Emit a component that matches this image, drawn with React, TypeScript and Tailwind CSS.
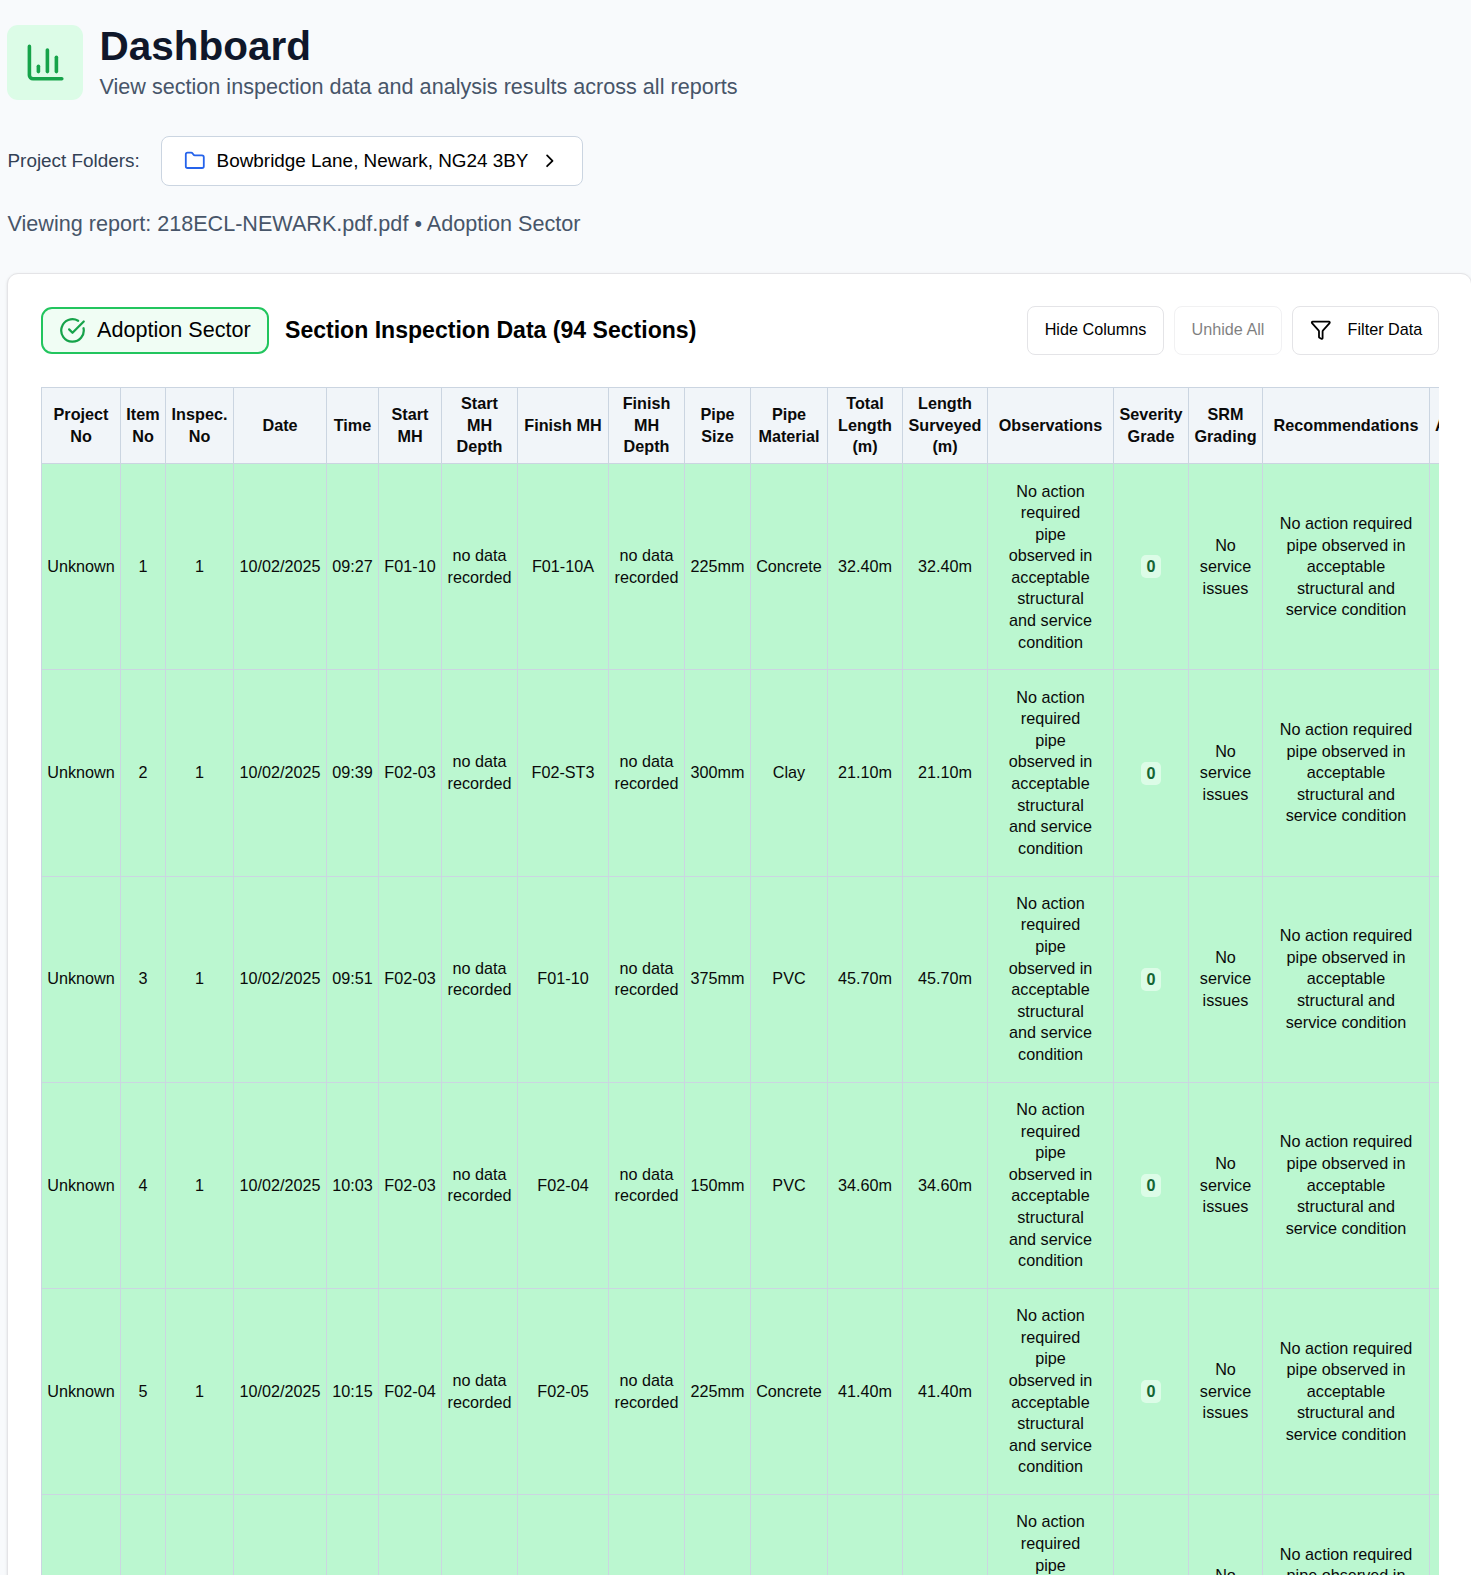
import React from "react";
import { ChartColumn, ChevronRight, CircleCheckBig, Filter, Folder } from "lucide-react";

const headers = [
  "Project No", "Item No", "Inspec. No", "Date", "Time", "Start MH", "Start MH Depth", "Finish MH", "Finish MH Depth",
  "Pipe Size", "Pipe Material", "Total Length (m)", "Length Surveyed (m)", "Observations", "Severity Grade",
  "SRM Grading", "Recommendations", "Adoptable",
];

const widths = [79, 45, 68, 93, 52, 63, 76, 91, 76, 66, 77, 75, 85, 126, 75, 74, 167, 90];

const verdict = "No action required pipe observed in acceptable structural and service condition";

const rows = [
  { item: 1, time: "09:27", start: "F01-10", finish: "F01-10A", size: "225mm", material: "Concrete", length: "32.40m" },
  { item: 2, time: "09:39", start: "F02-03", finish: "F02-ST3", size: "300mm", material: "Clay", length: "21.10m" },
  { item: 3, time: "09:51", start: "F02-03", finish: "F01-10", size: "375mm", material: "PVC", length: "45.70m" },
  { item: 4, time: "10:03", start: "F02-03", finish: "F02-04", size: "150mm", material: "PVC", length: "34.60m" },
  { item: 5, time: "10:15", start: "F02-04", finish: "F02-05", size: "225mm", material: "Concrete", length: "41.40m" },
  { item: 6, time: "10:27", start: "F02-05", finish: "F02-06", size: "225mm", material: "Concrete", length: "28.50m" },
];

const cell = "border border-[#cbd5e1] text-center align-middle";

function SectionRow({ row }: { row: (typeof rows)[number] }) {
  const values = [
    "Unknown", row.item, 1, "10/02/2025", row.time, row.start, "no data recorded", row.finish, "no data recorded",
    row.size, row.material, row.length, row.length,
  ];
  return (
    <tr className="h-[206.2px] bg-[#bbf7d0]">
      {values.map((value, i) => (
        <td key={i} className={`${cell} px-[4px]`}>{value}</td>
      ))}
      <td className={`${cell} px-[19px]`}>{verdict}</td>
      <td className={cell}>
        <span className="inline-block rounded-[5px] bg-[#dcfce7] px-[5.4px] py-px font-bold leading-[21px] text-[#166534]">0</span>
      </td>
      <td className={`${cell} px-2`}>No service issues</td>
      <td className={`${cell} px-4`}>{verdict}</td>
      <td className={cell}></td>
    </tr>
  );
}

export default function App() {
  return (
    <div className="h-[1575px] overflow-hidden bg-[#f8fafc] pl-[7px] pt-[25px] font-['Liberation_Sans',Arial,sans-serif] text-black">
      <header className="flex h-[75px] items-start gap-[16px]">
        <div className="flex h-[75px] w-[76px] items-center justify-center rounded-[11px] bg-[#dcfce7] pl-[1px]">
          <ChartColumn className="size-[43.2px] text-[#16a34a]" strokeWidth={2} />
        </div>
        <div className="pl-[0.5px]">
          <h1 className="text-[40.5px] font-bold leading-[43px] text-[#0f172a]">Dashboard</h1>
          <p className="text-[21.6px] leading-[37px] text-[#475569]">
            View section inspection data and analysis results across all reports
          </p>
        </div>
      </header>

      <div className="mt-[36px] flex h-[50px] items-center">
        <span className="w-[154px] pl-[0.5px] text-[18.9px] text-[#334155]">Project Folders:</span>
        <button className="flex h-[50px] w-[422px] items-center rounded-[8px] border border-[#cbd5e1] bg-white pl-[22px] text-[18.9px]">
          <Folder className="size-[21.6px] text-[#2563eb]" />
          <span className="ml-[11px]">Bowbridge Lane, Newark, NG24 3BY</span>
          <ChevronRight className="ml-[11px] size-[21.6px]" />
        </button>
      </div>

      <p className="mt-[22px] pl-[0.5px] text-[21.6px] leading-[32px] text-[#475569]">
        Viewing report: 218ECL-NEWARK.pdf.pdf • Adoption Sector
      </p>

      <section className="mt-[33px] h-[1400px] w-[1465px] rounded-[11px] border border-[#e4e4e7] bg-white pl-[33px] pr-[32px] pt-[32px] shadow-sm">
        <div className="flex h-[49px] items-center">
          <div className="flex h-[47px] w-[228px] items-center rounded-[11px] border-2 border-[#22c55e] bg-[#f0fdf4] pl-[16px] text-[21.6px]">
            <CircleCheckBig className="size-[27px] text-[#16a34a]" />
            <span className="ml-[11px]">Adoption Sector</span>
          </div>
          <h2 className="ml-[16px] pb-[1px] text-[23.07px] font-bold leading-[36px]">Section Inspection Data (94 Sections)</h2>
          <div className="ml-auto flex gap-[10px] text-[16.2px]">
            <button className="h-[49px] w-[137px] rounded-[8px] border border-[#e4e4e7] pb-[2px]">Hide Columns</button>
            <button className="h-[49px] w-[108px] rounded-[8px] border border-[#e4e4e7] pb-[2px] opacity-50">Unhide All</button>
            <button className="flex h-[49px] w-[147px] items-center rounded-[8px] border border-[#e4e4e7] pb-[2px] pl-[17px]">
              <Filter className="size-[21.6px]" />
              <span className="ml-[16px]">Filter Data</span>
            </button>
          </div>
        </div>

        <div className="mt-[32px] w-[1398px] overflow-hidden">
          <table className="w-[1478px] table-fixed border-collapse text-[16.2px] leading-[21.6px] text-[#0a0a0a]">
            <colgroup>
              {widths.map((width, i) => (
                <col key={i} style={{ width }} />
              ))}
            </colgroup>
            <thead>
              <tr className="h-[76.3px] bg-[#f1f5f9]">
                {headers.map((label) => (
                  <th key={label} className={`${cell} ${label.endsWith("Depth") ? "px-[8px]" : "px-[4px]"} font-bold`}>{label}</th>
                ))}
              </tr>
            </thead>
            <tbody>
              {rows.map((row) => (
                <SectionRow key={row.item} row={row} />
              ))}
            </tbody>
          </table>
        </div>
      </section>
    </div>
  );
}
